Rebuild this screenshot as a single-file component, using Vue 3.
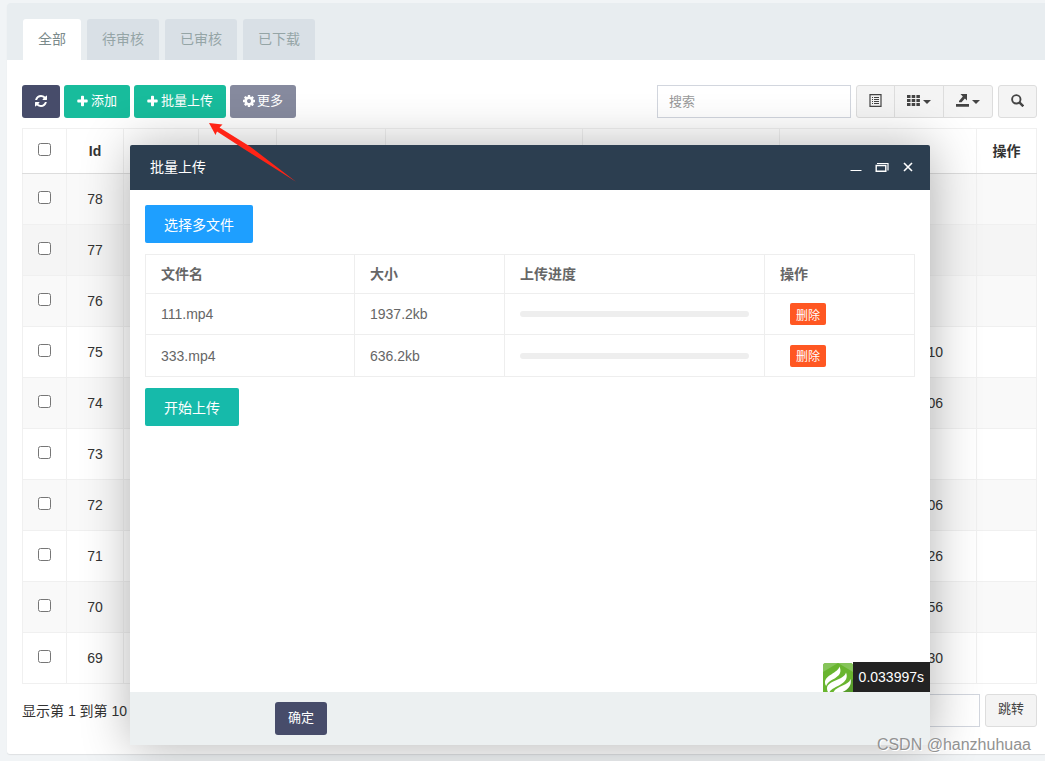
<script setup>
import { ref } from 'vue'

const tabs = ['全部', '待审核', '已审核', '已下载']
const activeTab = ref('全部')
const rows = [
  { id: 78, time: '' },
  { id: 77, time: '' },
  { id: 76, time: '' },
  { id: 75, time: '10' },
  { id: 74, time: '06' },
  { id: 73, time: '' },
  { id: 72, time: '06' },
  { id: 71, time: '26' },
  { id: 70, time: '56' },
  { id: 69, time: '30' }
]
const hovered = 77
const files = [
  { name: '111.mp4', size: '1937.2kb', progress: 0 },
  { name: '333.mp4', size: '636.2kb', progress: 0 }
]
</script>

<template>
  <div class="page">
    <main class="panel">
      <nav class="tabs">
        <a
          v-for="tab in tabs"
          :key="tab"
          href="#"
          class="tab"
          :class="{ active: tab === activeTab }"
          @click.prevent="activeTab = tab"
        >{{ tab }}</a>
      </nav>

      <div class="content">
        <div class="toolbar">
          <div class="actions">
            <button type="button" class="btn navy" aria-label="刷新">
              <svg class="icon" viewBox="0 0 1536 1536" fill="currentColor">
                <path d="M1511 928q0 5-1 7-64 268-268 434.500T764 1536q-146 0-282.500-55T238 1324l-129 129q-19 19-45 19t-45-19-19-45V960q0-26 19-45t45-19h448q26 0 45 19t19 45-19 45l-137 137q71 66 161 102t187 36q134 0 250-65t186-179q11-17 53-117 8-23 30-23h192q13 0 22.500 9.500t9.500 22.500zM1536 128v448q0 26-19 45t-45 19h-448q-26 0-45-19t-19-45 19-45l138-138Q969 256 768 256q-134 0-250 65T332 500q-11 17-53 117-8 23-30 23H50q-13 0-22.500-9.500T18 608v-7q65-268 270-434.500T768 0q146 0 284 55.500T1297 212l130-129q19-19 45-19t45 19 19 45z" />
              </svg>
            </button>
            <button type="button" class="btn green">
              <svg class="icon" viewBox="0 0 12 12" fill="currentColor"><path d="M4.800.8h1.400q.8 0 .8.800V4.500h2.900q.8 0 .8.800v1.400q0 .8-.8.800H7v2.900q0 .8-.8.800H4.800q-.8 0-.8-.8V7.500H1.100q-.8 0-.8-.8V5.300q0-.8.800-.8H4V1.600q0-.8.800-.8z" /></svg>
              添加
            </button>
            <button type="button" class="btn green">
              <svg class="icon" viewBox="0 0 12 12" fill="currentColor"><path d="M4.800.8h1.400q.8 0 .8.800V4.500h2.900q.8 0 .8.800v1.400q0 .8-.8.800H7v2.900q0 .8-.8.800H4.800q-.8 0-.8-.8V7.500H1.100q-.8 0-.8-.8V5.300q0-.8.800-.8H4V1.600q0-.8.800-.8z" /></svg>
              批量上传
            </button>
            <button type="button" class="btn grey">
              <svg class="icon" viewBox="0 0 1536 1536" fill="currentColor">
                <path d="M1024 768q0-106-75-181t-181-75-181 75-75 181 75 181 181 75 181-75 75-181zm512-109v222q0 12-8 23t-20 13l-185 28q-19 54-39 91 35 50 107 138 10 12 10 25t-9 23q-27 37-99 108t-94 71q-12 0-26-9l-138-108q-44 23-91 38-16 136-29 186-7 28-36 28H657q-14 0-24.500-8.500T621 1506l-28-184q-49-16-90-37l-141 107q-10 9-25 9-14 0-25-11-126-114-165-168-7-10-7-23 0-12 8-23 15-21 51-66.500t54-70.500q-27-50-41-99L29 913q-13-2-21-12.500T0 877V655q0-12 8-23t19-13l186-28q14-46 39-92-40-57-107-138-10-12-10-24 0-10 9-23 26-36 98.500-107.500T337 135q13 0 26 10l138 107q44-23 91-38 16-136 29-186 7-28 36-28h222q14 0 24.500 8.500T915 30l28 184q49 16 90 37l142-107q9-9 24-9 13 0 25 10 129 119 165 170 7 8 7 22 0 12-8 23-15 21-51 66.500t-54 70.500q26 50 41 98l183 28q13 2 21 12.500t8 23.500z" />
              </svg>
              更多
            </button>
          </div>

          <div class="tools">
            <input class="field search" type="text" placeholder="搜索" aria-label="搜索">
            <div class="group">
              <button type="button" class="btn light" aria-label="切换视图">
                <svg class="glyph" viewBox="0 0 13 13">
                  <path d="M1 .6h11v11.800H1z" fill="none" stroke="currentColor" stroke-width="1.200" />
                  <path d="M3 3h1v1H3zM5 3h5v1H5zM3 5h1v1H3zM5 5h5v1H5zM3 7h1v1H3zM5 7h5v1H5zM3 9h1v1H3zM5 9h5v1H5z" fill="currentColor" />
                </svg>
              </button>
              <button type="button" class="btn light" aria-label="列">
                <svg class="glyph" viewBox="0 0 13 13" fill="currentColor">
                  <path d="M0 1h3.500v3H0zM4.700 1h3.500v3H4.700zM9.400 1h3.500v3H9.400zM0 5h3.500v3H0zM4.700 5h3.500v3H4.700zM9.400 5h3.500v3H9.400zM0 9h3.500v3H0zM4.700 9h3.500v3H4.700zM9.400 9h3.500v3H9.400z" />
                </svg>
                <span class="caret"></span>
              </button>
              <button type="button" class="btn light" aria-label="导出">
                <svg class="glyph" viewBox="0 0 13 13" fill="currentColor">
                  <path d="M0 10h13v2.800H0zM4.500 0H11v6.500L8.900 4.600 5.500 8.200H3V7l3.800-4.500z" />
                </svg>
                <span class="caret"></span>
              </button>
            </div>
            <button type="button" class="btn light" aria-label="高级搜索">
              <svg class="glyph" viewBox="0 0 13 13" fill="none" stroke="currentColor">
                <circle cx="5.300" cy="5.300" r="4.200" stroke-width="1.900" />
                <path d="M8.400 8.400l3.900 3.900" stroke-width="2.500" />
              </svg>
            </button>
          </div>
        </div>

        <table class="records">
          <colgroup>
            <col class="w-check"><col class="w-id"><col class="w-a"><col class="w-b"><col class="w-c"><col><col><col><col class="w-op">
          </colgroup>
          <thead>
            <tr>
              <th><input type="checkbox" aria-label="全选"></th>
              <th>Id</th>
              <th v-for="n in 6" :key="n"></th>
              <th>操作</th>
            </tr>
          </thead>
          <tbody>
            <tr v-for="row in rows" :key="row.id" :class="{ hovered: row.id === hovered }">
              <td><input type="checkbox" :aria-label="'选择 ' + row.id"></td>
              <td>{{ row.id }}</td>
              <td v-for="n in 5" :key="n"></td>
              <td class="time">{{ row.time }}</td>
              <td></td>
            </tr>
          </tbody>
        </table>

        <div class="pager">
          <span>显示第 1 到第 10</span>
          <div class="jump">
            <input class="field page-no" type="text" aria-label="页码">
            <button type="button" class="btn light">跳转</button>
          </div>
        </div>
      </div>
    </main>

    <section class="dialog" role="dialog" aria-labelledby="dialog-title">
      <header class="dialog-head">
        <span id="dialog-title">批量上传</span>
        <div class="window-buttons">
          <button type="button" aria-label="最小化">
            <svg viewBox="0 0 14 14" stroke="currentColor"><path d="M1.500 10.500h11" /></svg>
          </button>
          <button type="button" aria-label="最大化">
            <svg viewBox="0 0 14 14" fill="none" stroke="currentColor"><path d="M1.200 5.500h9.600v5.800H1.200z" stroke-width="1.400" /><path d="M2 3.500h11v7" stroke-width="1.200" /></svg>
          </button>
          <button type="button" aria-label="关闭">
            <svg viewBox="0 0 14 14" stroke="currentColor" stroke-width="1.600"><path d="M3 3l8 8M11 3l-8 8" /></svg>
          </button>
        </div>
      </header>

      <div class="dialog-body">
        <button type="button" class="big blue">选择多文件</button>
        <table class="files">
          <colgroup><col><col class="w-size"><col class="w-progress"><col class="w-size"></colgroup>
          <thead>
            <tr><th>文件名</th><th>大小</th><th>上传进度</th><th>操作</th></tr>
          </thead>
          <tbody>
            <tr v-for="file in files" :key="file.name">
              <td>{{ file.name }}</td>
              <td>{{ file.size }}</td>
              <td><div class="track"><div class="fill" :style="{ width: file.progress + '%' }"></div></div></td>
              <td><button type="button" class="delete">删除</button></td>
            </tr>
          </tbody>
        </table>
        <button type="button" class="big teal">开始上传</button>

        <div class="trace">
          <svg class="trace-logo" viewBox="0 0 30 29">
            <path d="M3 0h24q3 0 3 3v26H0V3q0-3 3-3z" fill="#69b52f" />
            <path d="M3 0h24q3 0 3 3v6L15 0 0 9V3q0-3 3-3z" fill="#86c45a" />
            <path d="M14 29L30 16v13z" fill="#579c2b" />
            <path d="M16.500 3.500C15 10 2 12 2 19.500c0 1.500.5 2.500 1.200 3.500 1.300-4.500 6.300-6 9.800-8.500 4.500-3 5.500-6.500 3.500-11z" fill="#fff" />
            <path d="M23 9.500C21.500 17 4.500 17.500 4 25c0 1.500.3 3 1 4h1.500c2-3.500 7-5 11-7.500 5.500-3.300 7.500-7 5.500-12z" fill="#fff" />
            <path d="M27.500 16C26 22.500 14 22.500 10.500 29h9c6-2.500 9.500-7 8-13z" fill="#fff" />
          </svg>
          <span class="trace-time">0.033997s</span>
        </div>
      </div>

      <footer class="dialog-foot">
        <button type="button" class="btn navy">确定</button>
      </footer>
    </section>

    <svg class="arrow" viewBox="0 0 90 62" fill="#ff2416" aria-hidden="true">
      <path d="M1 1L14.500 2.500L11.500 5.500L42 24.500L88 59.800L36 27L9 9.500L7.500 13z" />
    </svg>
    <span class="watermark">CSDN @hanzhuhuaa</span>
  </div>
</template>

<style>
body {
  background: #f1f4f6;
}
</style>

<style scoped>
* {
  box-sizing: border-box;
}

.page {
  position: relative;
  min-height: 100vh;
  padding: 3px 0 7px 7px;
  overflow: hidden;
  color: #333;
  font: 14px/20px "Liberation Sans", "Noto Sans CJK SC", sans-serif;
}

button,
input {
  font-family: inherit;
}

.panel {
  background: #fff;
  border-radius: 3px 0 0 3px;
  box-shadow: 0 1px 1px rgba(0, 0, 0, 0.08);
}

.tabs {
  display: flex;
  gap: 6px;
  padding: 16px 16px 0;
  background: #e8edf0;
  border-radius: 3px 0 0;
}

.tab {
  padding: 10px 15px 11px;
  border-radius: 3px 3px 0 0;
  background: #d9e0e6;
  color: #95a5a6;
  text-decoration: none;
}

.tab.active {
  background: #fff;
  color: #7b8a8b;
}

.content {
  padding: 25px 8px 27px 15px;
}

.toolbar,
.pager {
  display: flex;
  justify-content: space-between;
}

.toolbar {
  margin-bottom: 10px;
}

.actions {
  display: flex;
  gap: 4px;
}

.tools,
.jump {
  display: flex;
  gap: 5px;
}

.btn {
  display: flex;
  align-items: center;
  gap: 2px;
  height: 33px;
  padding: 0 12px 2px;
  border: 1px solid transparent;
  border-radius: 3px;
  color: #fff;
  font-size: 13px;
  line-height: 20px;
}

.navy { background: #474c6a; }
.green { background: #18bc9c; }
.grey { background: #868a9e; }

.light {
  gap: 3px;
  padding-bottom: 3px;
  border-color: #ddd;
  background: #f4f4f4;
  color: #444;
}

.icon {
  width: 12px;
  height: 12px;
}

.glyph {
  width: 13px;
  height: 13px;
}

.group {
  display: flex;
}

.group .btn {
  border-radius: 0;
}

.group .btn + .btn {
  margin-left: -1px;
}

.group .btn:first-child { border-radius: 3px 0 0 3px; }
.group .btn:last-child { border-radius: 0 3px 3px 0; }

.caret {
  margin-top: 4px;
  border: 4px solid transparent;
  border-top-color: currentColor;
  border-bottom-width: 0;
}

.field {
  height: 33px;
  padding: 0 11px;
  border: 1px solid #d2d6de;
  background: #fff;
  font-size: 13px;
}

.field::placeholder {
  color: #999;
}

.search {
  width: 194px;
}

.records,
.files {
  width: 100%;
  border-collapse: collapse;
  table-layout: fixed;
}

.records th,
.records td {
  height: 51px;
  padding: 0;
  border: 1px solid #f0f0f0;
  text-align: center;
}

.records th {
  height: 45px;
  border-bottom: 1px solid #ddd;
}

.records tbody tr:nth-child(odd) { background: #f9f9f9; }
.records tbody tr.hovered { background: #f5f5f5; }

.records input {
  display: block;
  margin: 0 auto 4px;
}

.records .time {
  padding-right: 33px;
  text-align: right;
}

.w-check { width: 44px; }
.w-id { width: 57px; }
.w-a { width: 75px; }
.w-b { width: 78px; }
.w-c { width: 109px; }
.w-op { width: 60px; }

.pager {
  align-items: center;
  padding-top: 10px;
}

.page-no {
  width: 60px;
}

.dialog {
  position: absolute;
  top: 145px;
  left: 130px;
  display: flex;
  flex-direction: column;
  width: 800px;
  height: 600px;
  border-radius: 2px;
  background: #fff;
  box-shadow: 1px 1px 50px rgba(0, 0, 0, 0.3);
}

.dialog-head {
  display: flex;
  align-items: center;
  justify-content: space-between;
  height: 45px;
  padding: 0 15px 2px 20px;
  border-radius: 2px 2px 0 0;
  background: #2c3e50;
  color: #fff;
}

.window-buttons {
  display: flex;
  gap: 12px;
}

.window-buttons button {
  padding: 0;
  border: 0;
  background: none;
  color: #fff;
}

.window-buttons svg {
  display: block;
  width: 14px;
  height: 14px;
}

.dialog-body {
  position: relative;
  flex: 1;
  padding: 15px;
}

.big {
  display: block;
  height: 38px;
  padding: 0 19px;
  border: 0;
  border-radius: 2px;
  color: #fff;
  font-size: 14px;
}

.blue { background: #1e9fff; }
.teal { background: #16baaa; }

.files {
  margin: 11px 0;
  color: #666;
}

.files th,
.files td {
  height: 41px;
  padding: 0 15px;
  border: 1px solid #eee;
  text-align: left;
}

.files th {
  height: 39px;
}

.files tbody tr:last-child td {
  height: 42px;
}

.w-size { width: 150px; }
.w-progress { width: 260px; }

.track {
  height: 6px;
  overflow: hidden;
  border-radius: 3px;
  background: #eee;
}

.fill {
  height: 6px;
  background: #16baaa;
}

.delete {
  display: block;
  height: 22px;
  margin-left: 10px;
  padding: 0 6px;
  border: 0;
  border-radius: 2px;
  background: #ff5722;
  color: #fff;
  font-size: 12px;
}

.trace {
  position: absolute;
  right: 0;
  bottom: 0;
  display: flex;
  align-items: flex-end;
}

.trace-logo {
  width: 30px;
  height: 29px;
}

.trace-time {
  padding: 0 6px;
  background: #232323;
  color: #fff;
  line-height: 30px;
}

.dialog-foot {
  padding: 10px 145px;
  background: #ecf0f1;
}

.arrow {
  position: absolute;
  top: 122px;
  left: 208px;
  width: 90px;
  height: 62px;
}

.watermark {
  position: absolute;
  right: 14px;
  bottom: 6px;
  color: #929292;
  font: 16px/20px "Liberation Sans", sans-serif;
  text-shadow: 1px 1px 0 #fff;
}
</style>
